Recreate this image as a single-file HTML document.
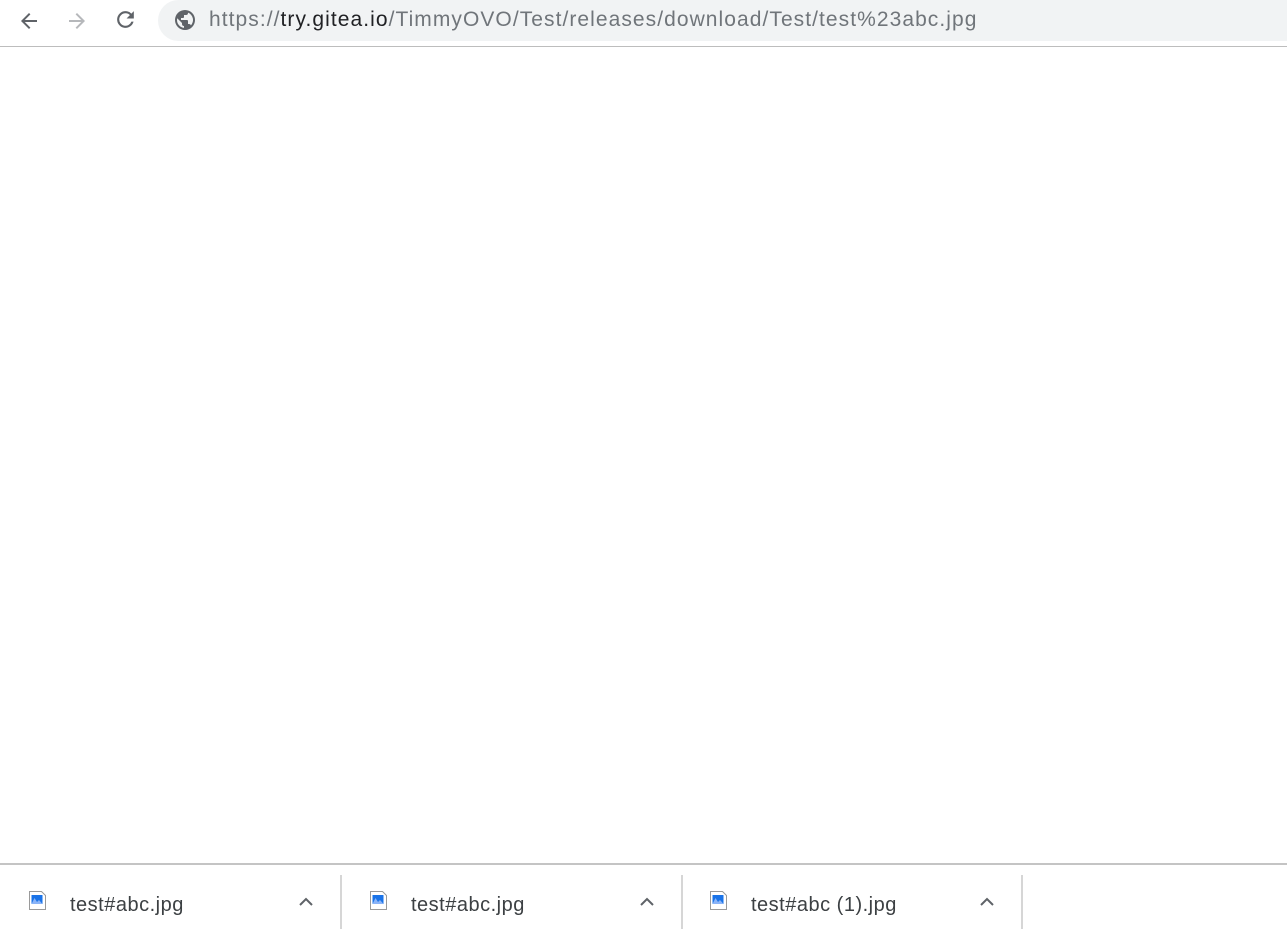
<!DOCTYPE html>
<html><head><style>
body{margin:0;width:1287px;height:937px;background:#fff;position:relative;overflow:hidden;font-family:"Liberation Sans",sans-serif}
.bar{position:absolute;left:0;top:0;width:1287px;height:46px;background:#fff;border-bottom:1px solid #bdbdbd}
.omni{position:absolute;left:158px;top:0;width:1140px;height:41px;background:#f1f3f4;border-radius:0 0 0 21px;border-top-left-radius:21px}
.url{position:absolute;left:209px;top:8px;font-size:21px;color:#70757a;white-space:nowrap;letter-spacing:1.06px}
.url b{font-weight:normal;color:#202124}
.shelf{position:absolute;left:0;top:863px;width:1287px;height:74px;border-top:2px solid #c4c4c4;background:#fff}
.item{position:absolute;top:0;width:341px;height:74px}
.item .name{position:absolute;left:70px;top:29px;font-size:20px;color:#3c4043;letter-spacing:0.5px}
.item .sep{position:absolute;left:340px;top:10px;width:2px;height:54px;background:#d6d6d6}
.item svg.ic{position:absolute;left:29px;top:26px}
.item svg.ch{position:absolute;left:298px;top:32px}
</style></head><body>
<div class="bar">
<svg style="position:absolute;left:17px;top:9px" width="24" height="24" viewBox="0 0 24 24"><path d="M20 11H7.8l5.6-5.6L12 4l-8 8 8 8 1.4-1.4L7.8 13H20z" fill="#5f6368"/></svg>
<svg style="position:absolute;left:65px;top:9px" width="24" height="24" viewBox="0 0 24 24"><path d="M4 11h12.2l-5.6-5.6L12 4l8 8-8 8-1.4-1.4 5.6-5.6H4z" fill="#b6b8bb"/></svg>
<svg style="position:absolute;left:113px;top:7px" width="25" height="25" viewBox="0 0 24 24"><path d="M17.65 6.35A7.96 7.96 0 0 0 12 4a8 8 0 1 0 7.73 10h-2.08A6 6 0 1 1 12 6c1.66 0 3.140.69 4.22 1.78L13 11h7V4z" fill="#5f6368"/></svg>
<div class="omni"></div>
<svg style="position:absolute;left:173px;top:8px" width="24" height="24" viewBox="0 0 24 24"><path d="M12 2a10 10 0 1 0 0 20 10 10 0 0 0 0-20zm-1 17.93A8 8 0 0 1 4 12c0-.62.08-1.21.21-1.79L9 15v1a2 2 0 0 0 2 2zm6.9-2.54A2 2 0 0 0 16 16h-1v-3a1 1 0 0 0-1-1H8v-2h2a1 1 0 0 0 1-1V7h2a2 2 0 0 0 2-2v-.41a7.98 7.98 0 0 1 2.9 12.8z" fill="#5f6368"/></svg>
<div class="url">https://<b>try.gitea.io</b>/TimmyOVO/Test/releases/download/Test/test%23abc.jpg</div>
</div>
<div class="shelf">
<div class="item" style="left:0">
<svg class="ic" width="17" height="19" viewBox="0 0 17 19"><path d="M0.5 0.5h12l4 4v14h-16z" fill="#fff" stroke="#9a9a9a"/><rect x="2.5" y="4" width="11" height="9" fill="#1a73e8"/><path d="M2.5 13l3-6 2.5 4 2-2 3.5 4z" fill="#8ab4f8"/></svg>
<div class="name">test#abc.jpg</div>
<svg class="ch" width="16" height="10" viewBox="0 0 16 10"><path d="M2 8l6-6 6 6" fill="none" stroke="#5f6368" stroke-width="2"/></svg>
<div class="sep"></div></div>
<div class="item" style="left:341px">
<svg class="ic" width="17" height="19" viewBox="0 0 17 19"><path d="M0.5 0.5h12l4 4v14h-16z" fill="#fff" stroke="#9a9a9a"/><rect x="2.5" y="4" width="11" height="9" fill="#1a73e8"/><path d="M2.5 13l3-6 2.5 4 2-2 3.5 4z" fill="#8ab4f8"/></svg>
<div class="name">test#abc.jpg</div>
<svg class="ch" width="16" height="10" viewBox="0 0 16 10"><path d="M2 8l6-6 6 6" fill="none" stroke="#5f6368" stroke-width="2"/></svg>
<div class="sep"></div></div>
<div class="item" style="left:681px">
<svg class="ic" width="17" height="19" viewBox="0 0 17 19"><path d="M0.5 0.5h12l4 4v14h-16z" fill="#fff" stroke="#9a9a9a"/><rect x="2.5" y="4" width="11" height="9" fill="#1a73e8"/><path d="M2.5 13l3-6 2.5 4 2-2 3.5 4z" fill="#8ab4f8"/></svg>
<div class="name">test#abc (1).jpg</div>
<svg class="ch" width="16" height="10" viewBox="0 0 16 10"><path d="M2 8l6-6 6 6" fill="none" stroke="#5f6368" stroke-width="2"/></svg>
<div class="sep"></div></div>
</div>
</body></html>
